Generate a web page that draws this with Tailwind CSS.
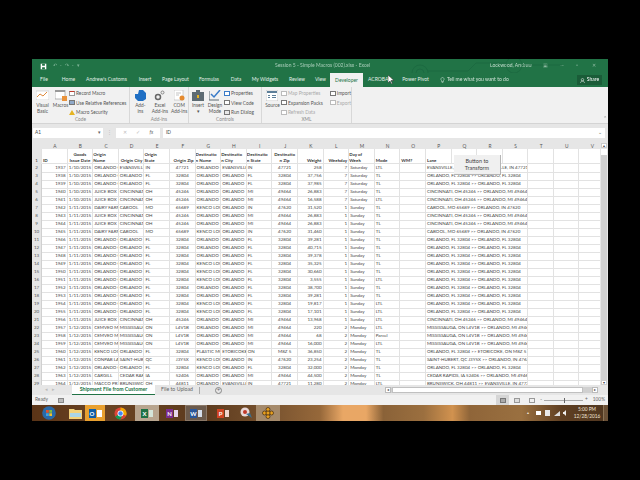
<!DOCTYPE html>
<html lang="en">
<head>
    <meta charset="UTF-8">
    <title>Session 5 - Simple Macros (002).xlsx - Excel</title>
    <script src="https://cdn.jsdelivr.net/npm/@tailwindcss/browser@4"></script>
</head>
<body class="bg-black w-[640px] h-[480px] overflow-hidden font-['Lato','Open_Sans',sans-serif] text-[4.8px] text-[#444]">
<div class="relative w-[576px] h-[362px] ml-[32px] mt-[59px] flex flex-col blur-[0.35px]">

    <!-- Title bar -->
    <div class="relative h-[14px] bg-[#217346] flex items-center text-[5px] text-[#cfe3d7] overflow-hidden">
        <svg class="w-[7px] h-[7px] ml-[8px]" viewBox="0 0 10 10"><path d="M1 1h8v8H1z" fill="#fff"/><path d="M3 1h4v3H3zM3 6h4v3H3z" fill="#217346"/></svg>
        <span class="ml-[6px] text-[#7fb497] tracking-[1px]">↶ · ↷ · ▾</span>
        <span class="absolute left-[243px] text-[#a9cdb9]">Session 5 - Simple Macros (002).xlsx - Excel</span>
        <span class="absolute left-[458px] text-[#c3dccd]">Lockwood, Andrew</span>
        <span class="absolute left-[511px] text-[#8fbba2]">▣</span>
        <span class="absolute left-[528px] text-[#8fbba2]">—</span>
        <span class="absolute left-[544px] text-[#8fbba2]">▫</span>
        <span class="absolute left-[560px] text-[#8fbba2]">✕</span>
        <svg class="absolute left-[370px] top-0 w-[160px] h-[14px]" viewBox="0 0 160 14"><g fill="none" stroke="#1c6840" stroke-width=".8"><circle cx="18" cy="14" r="8"/><circle cx="18" cy="14" r="4"/><circle cx="112" cy="6" r="8"/><path d="M26 12h40l8-8h30M120 6h40"/></g></svg>
    </div>

    <!-- Tabs -->
    <div class="relative h-[14px] bg-[#217346] flex items-center text-[5px] text-[#e3efe8]">
        <span class="w-[24px] text-center">File</span>
        <span class="w-[25px] text-center">Home</span>
        <span class="w-[51px] text-center">Andrew's Customs</span>
        <span class="w-[26px] text-center">Insert</span>
        <span class="w-[35px] text-center">Page Layout</span>
        <span class="w-[32px] text-center">Formulas</span>
        <span class="w-[22px] text-center">Data</span>
        <span class="w-[36px] text-center">My Widgets</span>
        <span class="w-[28px] text-center">Review</span>
        <span class="w-[19px] text-center">View</span>
        <span class="w-[33px] h-[14px] leading-[14px] text-center bg-[#f1f1f1] text-[#217346]">Developer</span>
        <span class="w-[33px] text-center">ACROBAT</span>
        <span class="w-[39px] text-center">Power Pivot</span>
        <svg class="w-[5px] h-[6px] ml-[5px]" viewBox="0 0 10 12"><path d="M5 1a3.400 3.400 0 0 0-2 6v2h4V7a3.400 3.400 0 0 0-2-6zM3.500 11h3" fill="none" stroke="#e3efe8"/></svg>
        <span class="ml-[2px] text-[#cfe3d7]">Tell me what you want to do</span>
        <div class="absolute left-[545px] top-[2px] w-[25px] h-[10px] bg-[#1a5c38] flex items-center justify-center gap-[2px] text-white">
            <svg class="w-[5px] h-[5px]" viewBox="0 0 10 10"><path d="M5 1a2.500 2.500 0 1 1 0 5 2.500 2.500 0 0 1 0-5zM1 10c.5-3 2-4 4-4s3.500 1 4 4" fill="none" stroke="#fff"/></svg>
            <span>Share</span>
        </div>
    </div>

    <!-- Ribbon -->
    <div class="h-[36px] bg-[#f1f1f1] flex text-[#555] leading-[6px]">
        <!-- Code -->
        <div class="w-[98px] border-r border-[#d8d8d8] flex flex-col">
            <div class="flex-1 flex pt-[3px]">
                <div class="w-[21px] flex flex-col items-center">
                    <svg class="w-[13px] h-[10px]" viewBox="0 0 13 10"><path d="M0 1h13v9H0z" fill="#fff" stroke="#bbb" stroke-width=".5"/><path d="M1 7l3-3 3 2 4-4" fill="none" stroke="#e08a3c"/></svg>
                    <span class="mt-[2px] text-center">Visual<br>Basic</span>
                </div>
                <div class="w-[15px] flex flex-col items-center">
                    <svg class="w-[12px] h-[11px]" viewBox="0 0 12 11"><path d="M0 0h10v9H0z" fill="#fff" stroke="#888" stroke-width=".6"/><path d="M0 0h10v2H0z" fill="#999"/><path d="M7 6h5v5H7z" fill="#e9933c"/></svg>
                    <span class="mt-[1px]">Macros</span>
                </div>
                <div class="flex flex-col gap-[3.5px] ml-[1px] whitespace-nowrap">
                    <div class="flex items-center gap-[1px]"><span class="w-[6px] h-[5px] bg-white border border-[#999] border-t-[#c0392b]"></span>Record Macro</div>
                    <div class="flex items-center gap-[1px]"><span class="w-[6px] h-[5px] bg-[#8fa9c9] border border-[#777]"></span>Use Relative References</div>
                    <div class="flex items-center gap-[1px]"><svg class="w-[6px] h-[5px]" viewBox="0 0 6 5"><path d="M3 0l3 5H0z" fill="#e6b422"/></svg>Macro Security</div>
                </div>
            </div>
            <div class="h-[7px] text-center text-[#888]">Code</div>
        </div>
        <!-- Add-ins -->
        <div class="w-[59px] border-r border-[#d8d8d8] flex flex-col">
            <div class="flex-1 flex pt-[3px] pl-[1px]">
                <div class="w-[19px] flex flex-col items-center">
                    <svg class="w-[11px] h-[11px]" viewBox="0 0 11 11"><path d="M4 0h4l3 3v6l-3 2H3L0 8V4h3z" fill="#1f6fc4"/></svg>
                    <span class="mt-[1px] text-center">Add-<br>ins</span>
                </div>
                <div class="w-[21px] flex flex-col items-center">
                    <svg class="w-[11px] h-[11px]" viewBox="0 0 11 11"><circle cx="4" cy="7" r="2.500" fill="none" stroke="#666" stroke-width="1.500"/><circle cx="8.500" cy="2.500" r="1.500" fill="none" stroke="#888"/></svg>
                    <span class="mt-[1px] text-center">Excel<br>Add-ins</span>
                </div>
                <div class="w-[18px] flex flex-col items-center">
                    <svg class="w-[11px] h-[11px]" viewBox="0 0 11 11"><path d="M0 0h9v10H0z" fill="#fff" stroke="#aaa" stroke-width=".5"/><path d="M2 3h5M2 5h3" stroke="#aaa" stroke-width=".7"/><circle cx="8" cy="8" r="2.500" fill="#e58a2e"/></svg>
                    <span class="mt-[1px] text-center">COM<br>Add-ins</span>
                </div>
            </div>
            <div class="h-[7px] text-center text-[#888]">Add-ins</div>
        </div>
        <!-- Controls -->
        <div class="w-[73px] border-r border-[#d8d8d8] flex flex-col">
            <div class="flex-1 flex pt-[3px] pl-[1px]">
                <div class="w-[16px] flex flex-col items-center">
                    <svg class="w-[12px] h-[11px]" viewBox="0 0 12 11"><path d="M4 0h4v2H4zM0 2h12v9H0z" fill="#5d6b73"/><path d="M5 5h2v3H5z" fill="#e6b422"/></svg>
                    <span class="mt-[1px] text-center">Insert<br>▾</span>
                </div>
                <div class="w-[18px] flex flex-col items-center">
                    <svg class="w-[12px] h-[11px]" viewBox="0 0 12 11"><path d="M0 1v9h10" fill="none" stroke="#5d6b73"/><path d="M2 4l3 3 6-7" fill="none" stroke="#3a7bc8" stroke-width="1.500"/></svg>
                    <span class="mt-[1px] text-center">Design<br>Mode</span>
                </div>
                <div class="flex flex-col gap-[3.5px] whitespace-nowrap">
                    <div class="flex items-center gap-[1px]"><span class="w-[6px] h-[5px] bg-white border border-[#3a7bc8]"></span>Properties</div>
                    <div class="flex items-center gap-[1px]"><span class="w-[6px] h-[5px] bg-white border border-[#777]"></span>View Code</div>
                    <div class="flex items-center gap-[1px]"><span class="w-[6px] h-[5px] bg-[#e8e8e8] border border-[#777]"></span>Run Dialog</div>
                </div>
            </div>
            <div class="h-[7px] text-center text-[#888]">Controls</div>
        </div>
        <!-- XML -->
        <div class="w-[90px] border-r border-[#d8d8d8] flex flex-col">
            <div class="flex-1 flex pt-[3px] pl-[2px]">
                <div class="w-[17px] flex flex-col items-center">
                    <svg class="w-[12px] h-[11px]" viewBox="0 0 12 11"><path d="M0 0h12v11H0z" fill="#fff" stroke="#999" stroke-width=".5"/><path d="M1 1h10v2H1zM2 5h2v1H2zM2 7h2v1H2zM6 5h4v1H6zM6 7h4v1H6z" fill="#5d7f99"/></svg>
                    <span class="mt-[1px]">Source</span>
                </div>
                <div class="flex flex-col gap-[3.5px] whitespace-nowrap w-[49px]">
                    <div class="flex items-center gap-[1px] text-[#aaa]"><span class="w-[6px] h-[5px] bg-white border border-[#bbb]"></span>Map Properties</div>
                    <div class="flex items-center gap-[1px]"><span class="w-[6px] h-[5px] bg-white border border-[#777]"></span>Expansion Packs</div>
                    <div class="flex items-center gap-[1px] text-[#aaa]"><span class="w-[6px] h-[5px] bg-white border border-[#bbb]"></span>Refresh Data</div>
                </div>
                <div class="flex flex-col gap-[3.5px] whitespace-nowrap">
                    <div class="flex items-center gap-[1px]"><span class="w-[6px] h-[5px] bg-white border border-[#777]"></span>Import</div>
                    <div class="flex items-center gap-[1px] text-[#aaa]"><span class="w-[6px] h-[5px] bg-white border border-[#bbb]"></span>Export</div>
                </div>
            </div>
            <div class="h-[7px] text-center text-[#888]">XML</div>
        </div>
        <div class="flex-1 relative"><span class="absolute right-[1px] bottom-[2px] text-[#888]">⌃</span></div>
    </div>

    <!-- Formula bar -->
    <div class="h-[20px] bg-[#e6e6e6] border-t border-[#d4d4d4] flex items-center gap-[3px] pb-[1px] pl-[1px] pr-[3px]">
        <div class="w-[70px] h-[10px] bg-white flex items-center justify-between px-[2px]"><span>A1</span><span class="text-[#666]">▾</span></div>
        <span class="text-[#bbb] w-[7px] text-center">⋮</span>
        <div class="w-[44px] h-[10px] bg-white flex items-center justify-around px-[2px] text-[#bbb]"><span>✕</span><span>✓</span><span class="text-[#666] italic">fx</span></div>
        <div class="flex-1 h-[10px] bg-white flex items-center justify-between px-[3px]"><span>ID</span><span class="text-[#666]">⌄</span></div>
    </div>

    <!-- Sheet -->
    <div class="relative h-[242px] flex bg-white overflow-hidden text-[4.5px]">
        <div class="w-[568px] overflow-hidden">
            <div id="sheet" class="w-[573px]">
                <div class="grid grid-cols-[10px_repeat(22,25.6px)] h-[6px] bg-[#e6e6e6] text-center text-[#555] leading-[6px] text-[4.8px]">
                    <span></span><span>A</span><span>B</span><span>C</span><span>D</span><span>E</span><span>F</span><span>G</span><span>H</span><span>I</span><span>J</span><span>K</span><span>L</span><span>M</span><span>N</span><span>O</span><span>P</span><span>Q</span><span>R</span><span>S</span><span>T</span><span>U</span><span>V</span>
                </div>
                <div class="grid grid-cols-[10px_repeat(22,25.6px)] h-[15px] font-bold text-[#333] leading-[5.500px] [&>div]:border-r [&>div]:border-b [&>div]:border-[#e2e2e2] [&>div]:flex [&>div]:items-end [&>div]:overflow-hidden">
                    <div class="bg-[#e6e6e6] justify-center font-normal">1</div>
                    <div class="pl-[1px]">ID</div><div class="justify-center text-center">Goods<br>Issue Date</div><div>Origin<br>Name</div><div class="justify-end pr-[1px]">Origin City</div><div>Origin<br>State</div><div class="justify-end pr-[1px]">Origin Zip</div><div>Destinatio<br>n Name</div><div>Destinatio<br>n City</div><div>Destinatio<br>n State</div><div class="justify-center text-center">Destinatio<br>n Zip</div><div class="justify-end pr-[1px]">Weight</div><div class="justify-end pr-[1px]">Weekday</div><div>Day of<br>Week</div><div class="pl-[1px]">Mode</div><div class="pl-[1px]">WM?</div><div class="pl-[1px]">Lane</div><div></div><div></div><div></div><div></div><div></div><div></div>
                </div>
                <div id="rows"></div>
            </div>
        </div>
        <!-- Vertical scrollbar -->
        <div class="w-[8px] bg-[#e6e6e6] flex flex-col items-center">
            <div class="w-[6px] h-[5px] bg-white border border-[#ccc] text-[4px] leading-[3px] text-center">▴</div>
            <div class="w-[6px] h-[6px] bg-white mt-[1px]"></div>
            <div class="flex-1 w-[6px] bg-[#d0d0d0]"></div>
            <div class="w-[6px] h-[5px] bg-white border border-[#ccc] text-[4px] leading-[3px] text-center">▾</div>
        </div>
        <!-- Form button over the sheet -->
        <div class="absolute left-[422px] top-[12px] w-[47px] h-[20px] bg-[#f0f0f0] border-r border-b border-[#b5b5b5] flex items-center justify-center text-center text-[5.500px] leading-[7px] text-[#444]">Button to<br>Transform</div>
    </div>

    <!-- Sheet tabs -->
    <div class="relative h-[10px] bg-[#e6e6e6] flex items-center text-[5.200px]">
        <span class="w-[40px] text-center text-[#bbb] tracking-[4px]">◂▸</span>
        <div class="w-[83px] h-[10px] bg-white border-b border-[#217346] text-center font-bold text-[#217346] leading-[9px]">Shipment File from Customer</div>
        <div class="w-[44px] text-center text-[#666]">File to Upload</div>
        <span class="w-px h-[7px] bg-[#aaa]"></span>
        <span class="ml-[15px] w-[7px] h-[7px] rounded-full border border-[#888] text-[#666] leading-[5px] text-center">+</span>
        <div class="absolute left-[353px] top-[2px] w-[213px] h-[6px] flex items-center bg-[#d0d0d0]">
            <span class="w-[6px] h-[6px] bg-white border border-[#bbb] text-[4px] leading-[4px] text-center">◂</span>
            <span class="ml-[1px] w-[191px] h-[6px] bg-white border border-[#c0c0c0]"></span>
            <span class="ml-auto w-[6px] h-[6px] bg-white border border-[#bbb] text-[4px] leading-[4px] text-center">▸</span>
        </div>
    </div>

    <!-- Status bar -->
    <div class="relative h-[10px] bg-[#f1f1f1] flex items-center text-[#666]">
        <span class="ml-[3px]">Ready</span>
        <span class="ml-[10px] w-[6px] h-[5px] bg-[#bbb] border border-[#888]"></span>
        <div class="ml-auto h-[10px] flex items-center">
            <div class="w-[13px] h-[10px] bg-[#d6d6d6] flex items-center justify-center"><span class="w-[6px] h-[5px] border border-[#777] bg-[#aaa]"></span></div>
            <span class="ml-[5px] w-[6px] h-[5px] border border-[#999] bg-[#ddd]"></span>
            <span class="ml-[9px] w-[6px] h-[5px] border border-[#999]"></span>
            <span class="ml-[5px]">-</span>
            <div class="relative ml-[2px] w-[39px] h-px bg-[#aaa]"><span class="absolute left-[20px] top-[-2px] w-[1px] h-[5px] bg-[#666]"></span></div>
            <span class="ml-[2px]">+</span>
            <span class="ml-[5px] mr-[3px]">100%</span>
        </div>
    </div>

    <!-- Taskbar -->
    <div class="relative h-[16px] flex items-center bg-[linear-gradient(90deg,#5a3417_0%,#6b4423_12%,#5c3a1d_30%,#7a5430_42%,#96683a_50%,#e9a765_54%,#e9a765_58%,#8a6238_61%,#9b6f3f_68%,#d1924f_73%,#8f6539_76%,#9a7040_85%,#5f3f22_92%,#4f3620_100%)]">
        <div class="w-[34px] flex justify-center"><svg class="w-[14px] h-[14px]" viewBox="0 0 14 14"><circle cx="7" cy="7" r="6.800" fill="#2a6aa8"/><path d="M4 4h2.800v2.800H4z" fill="#e2552d"/><path d="M7.300 4H10v2.800H7.300z" fill="#7fbb42"/><path d="M4 7.300h2.800V10H4z" fill="#3fa3e0"/><path d="M7.300 7.300H10V10H7.300z" fill="#f5c02c"/></svg></div>
        <div class="w-[20px] flex justify-center ml-[-1px]"><svg class="w-[13px] h-[11px]" viewBox="0 0 13 11"><path d="M0 1h5l1 1h7v9H0z" fill="#f3d27a"/><path d="M1 5h11v4H1z" fill="#a9d5e8"/></svg></div>
        <div class="w-[20px] h-[16px] bg-[#e8a030] flex items-center justify-center gap-[1px]"><span class="w-[7px] h-[9px] bg-[#0f5fa8] text-white text-[6px] leading-[9px] text-center font-bold">O</span><span class="w-[5px] h-[7px] bg-white"></span></div>
        <div class="w-[30px] flex justify-center"><svg class="w-[13px] h-[13px]" viewBox="0 0 14 14"><circle cx="7" cy="7" r="6.500" fill="#db4437"/><path d="M7 7L1.400 10.300A6.500 6.500 0 0 0 7 13.500L10 7z" fill="#0f9d58"/><path d="M7 .5A6.500 6.500 0 0 1 13 9.500L7 7V.5" fill="#f4b400" opacity=".9"/><circle cx="7" cy="7" r="3.200" fill="#fff"/><circle cx="7" cy="7" r="2.400" fill="#4285f4"/></svg></div>
        <div class="w-[24px] h-[16px] bg-[#b8a58f] flex items-center justify-center gap-[1px]"><span class="w-[7px] h-[9px] bg-[#1e7145] text-white text-[6px] leading-[9px] text-center font-bold">X</span><span class="w-[4px] h-[7px] bg-[#d5e5da]"></span></div>
        <div class="w-[26px] flex items-center justify-center gap-[1px]"><span class="w-[7px] h-[9px] bg-[#7b2c8e] text-white text-[6px] leading-[9px] text-center font-bold">N</span><span class="w-[4px] h-[7px] bg-[#e8d6ec]"></span></div>
        <div class="w-[22px] h-[16px] bg-[#6b5a4c] border border-[#8a7766] flex items-center justify-center gap-[1px]"><span class="w-[7px] h-[9px] bg-[#2b579a] text-white text-[6px] leading-[9px] text-center font-bold">W</span><span class="w-[4px] h-[7px] bg-[#d5deeb]"></span></div>
        <div class="w-[26px] flex items-center justify-center gap-[1px] ml-[3px]"><span class="w-[7px] h-[9px] bg-[#d04423] text-white text-[6px] leading-[9px] text-center font-bold">P</span><span class="w-[4px] h-[7px] bg-[#f3d7cf]"></span></div>
        <div class="w-[20px] flex justify-center"><svg class="w-[13px] h-[12px]" viewBox="0 0 13 12"><circle cx="5" cy="5" r="4.500" fill="#e8d8d8"/><circle cx="5" cy="5" r="2" fill="#c0392b"/><path d="M6 7l6 4-2-5z" fill="#3c6e8c"/></svg></div>
        <div class="w-[24px] h-[16px] bg-[#a58a6b] flex justify-center items-center"><svg class="w-[12px] h-[12px]" viewBox="0 0 12 12"><g fill="#e8a020" stroke="#2b1a08" stroke-width=".6"><circle cx="6" cy="2.500" r="2"/><circle cx="6" cy="9.500" r="2"/><circle cx="2.500" cy="6" r="2"/><circle cx="9.500" cy="6" r="2"/><circle cx="6" cy="6" r="2"/></g></svg></div>
        <div class="ml-auto flex items-center text-[#f1e6da]">
            <span class="text-[4px]">▴</span>
            <span class="ml-[7px] w-[5px] h-[4px] bg-white"></span>
            <span class="ml-[4px] w-[5px] h-[6px] bg-[#e8e8e8]"></span>
            <svg class="ml-[4px] w-[6px] h-[5px]" viewBox="0 0 6 5"><path d="M0 5L6 0v5z" fill="#ddd"/></svg>
            <svg class="ml-[3px] w-[5px] h-[6px]" viewBox="0 0 5 6"><path d="M0 2h1l2-2v6L1 4H0z" fill="#eee"/></svg>
            <div class="ml-[5px] w-[28px] text-center leading-[7px]">5:00 PM<br>12/28/2016</div>
            <span class="ml-[2px] w-[5px] h-[16px] bg-[#6a5036] border-l border-[#8a7356]"></span>
        </div>
    </div>

    <!-- Mouse pointer -->
    <svg class="absolute left-[356px] top-[16px] w-[6px] h-[9px]" viewBox="0 0 6 9"><path d="M0 0v8l2-2 1.500 3 1-.5L3 5.500h3z" fill="#fff" stroke="#222" stroke-width=".5"/></svg>
</div>

<script>
    var OC = 'ORLANDO C', OR = 'ORLANDO', KL = 'KENCO LOG', JB = 'JUICE BOX', DF = 'DAIRY FARM', CI = 'CINCINNATI', CE = 'CEMVEO MP', MI = 'MISSISSAUG';
    var O2O = 'ORLANDO, FL 32804 >> ORLANDO, FL 32804', C2O = 'CINCINNATI, OH 45246 >> ORLANDO, MI 49464', B2O = 'CABOOL, MO 65689 >> ORLANDO, IN 47620', M2O = 'MISSISSAUGA, ON L4V1B >> ORLANDO, MI 49464';
    var d0 = '1/10/2015', d1 = '1/11/2015', d2 = '1/12/2015';
    var data = [
        [1937,d0,OC,'EVANSVILLE','IN','47721',OC,'EVANSVILLE','IN','47721','258',7,'Saturday','LTL','EVANSVILLE, IN 47721 >> EVANSVILLE, IN 47721'],
        [1938,d0,OC,OR,'FL','32804',OC,OR,'FL','32804','37,756',7,'Saturday','TL',O2O],
        [1939,d0,OC,OR,'FL','32804',OC,OR,'FL','32804','37,985',7,'Saturday','TL',O2O],
        [1940,d0,JB,CI,'OH','45246',OC,OR,'MI','49464','26,883',7,'Saturday','TL',C2O],
        [1941,d0,JB,CI,'OH','45246',OC,OR,'MI','49464','16,588',7,'Saturday','LTL',C2O],
        [1942,d1,DF,'CABOOL','MO','65689',KL,OR,'IN','47620','31,520',1,'Sunday','TL',B2O],
        [1943,d1,JB,CI,'OH','45246',OC,OR,'MI','49464','26,883',1,'Sunday','TL',C2O],
        [1944,d1,JB,CI,'OH','45246',OC,OR,'MI','49464','26,883',1,'Sunday','TL',C2O],
        [1945,d1,DF,'CABOOL','MO','65689',KL,OR,'IN','47620','31,460',1,'Sunday','TL',B2O],
        [1946,d1,OC,OR,'FL','32804',OC,OR,'FL','32804','39,281',1,'Sunday','TL',O2O],
        [1947,d1,OC,OR,'FL','32804',OC,OR,'FL','32804','40,715',1,'Sunday','TL',O2O],
        [1948,d1,OC,OR,'FL','32804',OC,OR,'FL','32804','39,378',1,'Sunday','TL',O2O],
        [1949,d1,OC,OR,'FL','32804',KL,OR,'FL','32804','35,325',1,'Sunday','TL',O2O],
        [1950,d1,OC,OR,'FL','32804',KL,OR,'FL','32804','30,660',1,'Sunday','TL',O2O],
        [1951,d1,OC,OR,'FL','32804',KL,OR,'FL','32804','3,555',1,'Sunday','LTL',O2O],
        [1952,d1,OC,OR,'FL','32804',OC,OR,'FL','32804','38,700',1,'Sunday','TL',O2O],
        [1953,d1,OC,OR,'FL','32804',OC,OR,'FL','32804','39,281',1,'Sunday','TL',O2O],
        [1954,d1,OC,OR,'FL','32804',KL,OR,'FL','32804','19,817',1,'Sunday','LTL',O2O],
        [1955,d1,OC,OR,'FL','32804',KL,OR,'FL','32804','17,101',1,'Sunday','LTL',O2O],
        [1956,d1,JB,CI,'OH','45246',OC,OR,'MI','49464','13,968',1,'Sunday','LTL',C2O],
        [1957,d2,CE,MI,'ON','L4V1B',OC,OR,'MI','49464','220',2,'Monday','LTL',M2O],
        [1958,d2,CE,MI,'ON','L4V1B',OC,OR,'MI','49464','68',2,'Monday','Parcel',M2O],
        [1959,d2,CE,MI,'ON','L4V1B',OC,OR,'MI','49464','16,000',2,'Monday','LTL',M2O],
        [1960,d2,KL,OR,'FL','32804','PLASTIC MC','ETOBICOKE','ON','M8Z 5','36,850',2,'Monday','TL','ORLANDO, FL 32804 >> ETOBICOKE, ON M8Z 5'],
        [1961,d2,'CONPAB LAI','SAINT-HUBE','QC','J3Y5X',KL,OR,'IN','47620','23,254',2,'Monday','TL','SAINT-HUBERT, QC J3Y5X >> ORLANDO, IN 47620'],
        [1962,d2,OC,OR,'FL','32804',KL,OR,'FL','32804','32,000',2,'Monday','TL',O2O],
        [1963,d2,'CARGILL','CEDAR RAPI','IA','52406',OC,OR,'MI','49464','44,500',2,'Monday','TL','CEDAR RAPIDS, IA 52406 >> ORLANDO, MI 49464'],
        [1964,d2,'MACCO PR','BRUNSWICK','OH','44811',OC,'EVANSVILLE','IN','47721','11,280',2,'Monday','LTL','BRUNSWICK, OH 44811 >> EVANSVILLE, IN 47721']
    ];
    var cell = 'border-r border-b border-[#e2e2e2] overflow-hidden whitespace-nowrap';
    var align = ['text-right pr-[1px]','text-right pr-[1px]','pl-[1px]','pl-[1px]','pl-[1px]','text-center','pl-[1px]','pl-[1px]','pl-[1px]','text-center','text-right pr-[1px]','text-right pr-[1px]','pl-[1px]','pl-[1px]'];
    var html = '';
    data.forEach(function (r, i) {
        html += '<div class="grid grid-cols-[10px_repeat(22,25.6px)] h-[8.03px] leading-[8px]">';
        html += '<div class="bg-[#e6e6e6] text-center border-r border-b border-[#d0d0d0] text-[#555]">' + (i + 2) + '</div>';
        for (var c = 0; c < 14; c++) html += '<div class="' + cell + ' ' + align[c] + '">' + r[c] + '</div>';
        html += '<div class="' + cell + '"></div>';
        html += '<div class="' + cell + ' col-span-4 pl-[1px]">' + r[14].replace(/>>/g, '&gt;&gt;') + '</div>';
        html += '<div class="' + cell + '"></div><div class="' + cell + '"></div><div class="' + cell + '"></div>';
        html += '</div>';
    });
    document.getElementById('rows').innerHTML = html;
</script>
</body>
</html>
